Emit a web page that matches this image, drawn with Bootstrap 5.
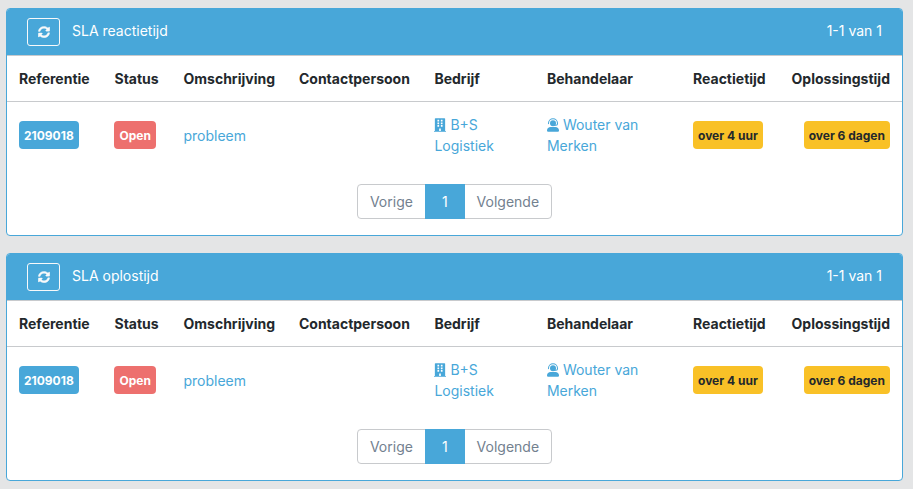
<!DOCTYPE html>
<html lang="nl">
<head>
<meta charset="utf-8">
<meta name="viewport" content="width=device-width, initial-scale=1">
<title>SLA overzicht</title>
<link href="https://cdn.jsdelivr.net/npm/bootstrap@5.3.0/dist/css/bootstrap.min.css" rel="stylesheet">
<style>
  :root { --sla-blue: #48a7d9; --sla-line: #c8cacd; }
  body { background: #e4e5e6; color: #23282c; font-family: Inter, "Liberation Sans", sans-serif; font-size: 14px; line-height: 21px; }
  main { padding: 8px 10px 8px 6px; gap: 17px; }
  .sla-card { border: 1px solid var(--sla-blue); border-radius: 4px; }
  .sla-head { background: var(--sla-blue); border-bottom: 1px solid var(--sla-line); border-radius: 3px 3px 0 0; padding: 9px 20px; gap: 12px; color: #fff; }
  .sla-head h2 { font-size: 14px; line-height: 21px; font-weight: 400; padding-bottom: 4px; }
  .sla-count { padding-bottom: 4px; }
  .btn-refresh { width: 33px; height: 28px; border-radius: 3px; }
  .sla-table { --bs-table-color: #23282c; --bs-table-bg: transparent; table-layout: fixed; }
  .sla-table > :not(caption) > * > * { padding: 12px; border-bottom: 0; }
  .sla-table > thead > tr > th { border-bottom: 1px solid var(--sla-line); font-weight: 700; white-space: nowrap; }
  .sla-table a { color: var(--sla-blue); }
  .sla-table svg { fill: currentColor; vertical-align: -2px; }
  .sla-table .badge { font-size: 12px; line-height: 18px; font-weight: 700; padding: 6px 5px 4px; border-radius: 4px; color: #fff; }
  .sla-table .tag-blue { background: var(--sla-blue); }
  .sla-table .tag-red { background: #ed706e; }
  .sla-table .tag-yellow { background: #f9c127; color: #23282c; }
  .c-ref { width: 10.67%; } .c-stat { width: 7.71%; } .c-desc { width: 12.9%; } .c-cont { width: 15.14%; }
  .c-comp { width: 12.57%; } .c-agent { width: 16.32%; } .c-react { width: 10.95%; }
  .pagination { --bs-pagination-font-size: 14px; --bs-pagination-color: #73818f; --bs-pagination-border-color: var(--sla-line); --bs-pagination-border-radius: 4px; --bs-pagination-active-bg: var(--sla-blue); --bs-pagination-active-border-color: var(--sla-blue); }
  .page-item.active .page-link { padding-inline: 16px; }
</style>
<script src="https://cdn.jsdelivr.net/npm/bootstrap@5.3.0/dist/js/bootstrap.bundle.min.js"></script>
</head>
<body>
<svg class="d-none" aria-hidden="true">
  <symbol id="i-sync" viewBox="0 0 512 512"><path stroke="currentColor" stroke-width="16" d="M371 142C340 112 299 96 256 96c-78 0-145 53-163 127-2 5-6 9-12 9H24c-7 0-13-7-12-14C33 102 134 16 256 16c66 0 127 26 171 69l35-35c15-15 41-4 41 17v128c0 13-11 24-24 24H351c-21 0-32-26-17-41zM33 296h128c21 0 32 26 17 41l-37 37c31 30 72 46 115 46 78 0 145-53 163-127 2-5 6-9 12-9h57c7 0 13 7 12 14-21 116-122 202-244 202-66 0-127-26-171-69l-35 35c-15 15-41 4-41-17V320c0-13 11-24 24-24z"/></symbol>
  <symbol id="i-building" viewBox="0 0 448 512"><path fill-rule="evenodd" d="M436 480h-20V24c0-13-11-24-24-24H56C43 0 32 11 32 24v456H12c-7 0-12 5-12 12v20h448v-20c0-7-5-12-12-12zM128 76c0-7 5-12 12-12h40c7 0 12 5 12 12v40c0 7-5 12-12 12h-40c-7 0-12-5-12-12zm0 96c0-7 5-12 12-12h40c7 0 12 5 12 12v40c0 7-5 12-12 12h-40c-7 0-12-5-12-12zm52 148h-40c-7 0-12-5-12-12v-40c0-7 5-12 12-12h40c7 0 12 5 12 12v40c0 7-5 12-12 12zm76 160h-64v-84c0-7 5-12 12-12h40c7 0 12 5 12 12zm64-172c0 7-5 12-12 12h-40c-7 0-12-5-12-12v-40c0-7 5-12 12-12h40c7 0 12 5 12 12zm0-96c0 7-5 12-12 12h-40c-7 0-12-5-12-12v-40c0-7 5-12 12-12h40c7 0 12 5 12 12zm0-96c0 7-5 12-12 12h-40c-7 0-12-5-12-12V76c0-7 5-12 12-12h40c7 0 12 5 12 12z"/></symbol>
  <symbol id="i-agent" viewBox="0 0 448 512"><path fill="none" stroke="currentColor" stroke-width="40" stroke-linecap="round" d="M56 204v-12a168 168 0 0 1 336 0v16q0 56-56 56H230"/><circle cx="224" cy="192" r="112"/><path d="M314 328H134C60 328 0 384 0 454v10c0 27 22 48 48 48h352c27 0 48-21 48-48v-10c0-70-60-126-134-126z"/></symbol>
</svg>
<main class="d-flex flex-column">
  <section class="sla-card bg-white">
    <header class="sla-head d-flex align-items-center">
      <button type="button" class="btn btn-outline-light btn-refresh d-flex align-items-center justify-content-center p-0" aria-label="Vernieuwen"><svg width="12" height="12" fill="currentColor"><use href="#i-sync"/></svg></button>
      <h2 class="mb-0">SLA reactietijd</h2>
      <span class="sla-count ms-auto">1-1 van 1</span>
    </header>
    <table class="table sla-table align-middle mb-3">
      <colgroup><col class="c-ref"><col class="c-stat"><col class="c-desc"><col class="c-cont"><col class="c-comp"><col class="c-agent"><col class="c-react"><col></colgroup>
      <thead><tr><th scope="col">Referentie</th><th scope="col">Status</th><th scope="col">Omschrijving</th><th scope="col">Contactpersoon</th><th scope="col">Bedrijf</th><th scope="col">Behandelaar</th><th scope="col">Reactietijd</th><th scope="col" class="text-end">Oplossingstijd</th></tr></thead>
      <tbody><tr>
        <td><a href="#" class="badge tag-blue text-white text-decoration-none">2109018</a></td>
        <td><span class="badge tag-red">Open</span></td>
        <td><a href="#" class="text-decoration-none">probleem</a></td>
        <td></td>
        <td><a href="#" class="text-decoration-none"><svg width="12" height="14" aria-hidden="true"><use href="#i-building"/></svg> B+S Logistiek</a></td>
        <td><a href="#" class="text-decoration-none"><svg width="12" height="14" aria-hidden="true"><use href="#i-agent"/></svg> Wouter van Merken</a></td>
        <td><span class="badge tag-yellow">over 4 uur</span></td>
        <td class="text-end"><span class="badge tag-yellow">over 6 dagen</span></td>
      </tr></tbody>
    </table>
    <nav aria-label="Pagina's SLA reactietijd">
      <ul class="pagination justify-content-center mb-3">
        <li class="page-item"><a class="page-link" href="#">Vorige</a></li>
        <li class="page-item active" aria-current="page"><a class="page-link" href="#">1</a></li>
        <li class="page-item"><a class="page-link" href="#">Volgende</a></li>
      </ul>
    </nav>
  </section>
  <section class="sla-card bg-white">
    <header class="sla-head d-flex align-items-center">
      <button type="button" class="btn btn-outline-light btn-refresh d-flex align-items-center justify-content-center p-0" aria-label="Vernieuwen"><svg width="12" height="12" fill="currentColor"><use href="#i-sync"/></svg></button>
      <h2 class="mb-0">SLA oplostijd</h2>
      <span class="sla-count ms-auto">1-1 van 1</span>
    </header>
    <table class="table sla-table align-middle mb-3">
      <colgroup><col class="c-ref"><col class="c-stat"><col class="c-desc"><col class="c-cont"><col class="c-comp"><col class="c-agent"><col class="c-react"><col></colgroup>
      <thead><tr><th scope="col">Referentie</th><th scope="col">Status</th><th scope="col">Omschrijving</th><th scope="col">Contactpersoon</th><th scope="col">Bedrijf</th><th scope="col">Behandelaar</th><th scope="col">Reactietijd</th><th scope="col" class="text-end">Oplossingstijd</th></tr></thead>
      <tbody><tr>
        <td><a href="#" class="badge tag-blue text-white text-decoration-none">2109018</a></td>
        <td><span class="badge tag-red">Open</span></td>
        <td><a href="#" class="text-decoration-none">probleem</a></td>
        <td></td>
        <td><a href="#" class="text-decoration-none"><svg width="12" height="14" aria-hidden="true"><use href="#i-building"/></svg> B+S Logistiek</a></td>
        <td><a href="#" class="text-decoration-none"><svg width="12" height="14" aria-hidden="true"><use href="#i-agent"/></svg> Wouter van Merken</a></td>
        <td><span class="badge tag-yellow">over 4 uur</span></td>
        <td class="text-end"><span class="badge tag-yellow">over 6 dagen</span></td>
      </tr></tbody>
    </table>
    <nav aria-label="Pagina's SLA oplostijd">
      <ul class="pagination justify-content-center mb-3">
        <li class="page-item"><a class="page-link" href="#">Vorige</a></li>
        <li class="page-item active" aria-current="page"><a class="page-link" href="#">1</a></li>
        <li class="page-item"><a class="page-link" href="#">Volgende</a></li>
      </ul>
    </nav>
  </section>
</main>
</body>
</html>
